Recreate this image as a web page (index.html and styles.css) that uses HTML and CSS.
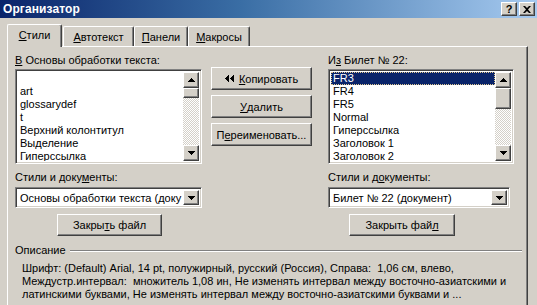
FILE: index.html
```html
<!DOCTYPE html>
<html lang="ru">
<head>
<meta charset="utf-8">
<title>Организатор</title>
<link rel="stylesheet" href="styles.css">
</head>
<body>
<div class="window">
  <div class="titlebar">
    <span class="title">Организатор</span>
    <div class="tbtns">
      <span class="tbtn raised q">?</span>
      <span class="tbtn raised"><svg width="8" height="7" viewBox="0 0 8 7"><path d="M0 0h2l2 2 2-2h2L5 3.5 8 7H6L4 5 2 7H0l3-3.5z"/></svg></span>
    </div>
  </div>

  <div class="tabs">
    <div class="tab active"><u>С</u>тили</div>
    <div class="tab t2"><u>А</u>втотекст</div>
    <div class="tab t3"><u>П</u>анели</div>
    <div class="tab t4"><u>М</u>акросы</div>
  </div>

  <div class="panel">
    <div class="cols">
      <div class="col left">
        <div class="lbl"><u>В</u> Основы обработки текста:</div>
        <div class="listbox sunken lb-left">
          <div class="items">
            <div class="item"></div>
            <div class="item">art</div>
            <div class="item">glossarydef</div>
            <div class="item">t</div>
            <div class="item">Верхний колонтитул</div>
            <div class="item">Выделение</div>
            <div class="item">Гиперссылка</div>
          </div>
          <div class="sb">
            <div class="arrow raised"><svg width="7" height="4" viewBox="0 0 7 4"><path d="M3 0h1v1h1v1h1v1h1v1H0V3h1V2h1V1h1z"/></svg></div>
            <div class="thumb raised th-small"></div>
            <div class="track"></div>
            <div class="arrow raised"><svg width="7" height="4" viewBox="0 0 7 4"><path d="M0 0h7v1H6v1H5v1H4v1H3V3H2V2H1V1H0z"/></svg></div>
          </div>
        </div>
        <div class="lbl lbl2">Стили и доку<u>м</u>енты:</div>
        <div class="combo sunken">
          <div class="ctext">Основы обработки текста (доку</div>
          <div class="cbtn raised"><svg width="7" height="4" viewBox="0 0 7 4"><path d="M0 0h7v1H6v1H5v1H4v1H3V3H2V2H1V1H0z"/></svg></div>
        </div>
        <div class="btn raised close-l">Закры<u>т</u>ь файл</div>
      </div>

      <div class="col mid">
        <div class="btn raised"><svg class="cpy" width="10" height="7" viewBox="0 0 10 7"><path d="M3 0h1v7H3V6H2V5H1V4H0V3h1V2h1V1h1z"/><path d="M8 0h1v7H8V6H7V5H6V4H5V3h1V2h1V1h1z"/></svg><span><u>К</u>опировать</span></div>
        <div class="btn raised"><u>У</u>далить</div>
        <div class="btn raised">П<u>е</u>реименовать...</div>
      </div>

      <div class="col right">
        <div class="lbl">И<u>з</u> Билет № 22:</div>
        <div class="listbox sunken lb-right">
          <div class="items">
            <div class="item sel">FR3</div>
            <div class="item">FR4</div>
            <div class="item">FR5</div>
            <div class="item">Normal</div>
            <div class="item">Гиперссылка</div>
            <div class="item">Заголовок 1</div>
            <div class="item">Заголовок 2</div>
          </div>
          <div class="sb">
            <div class="arrow raised"><svg width="7" height="4" viewBox="0 0 7 4"><path d="M3 0h1v1h1v1h1v1h1v1H0V3h1V2h1V1h1z"/></svg></div>
            <div class="thumb raised th-big"></div>
            <div class="track"></div>
            <div class="arrow raised"><svg width="7" height="4" viewBox="0 0 7 4"><path d="M0 0h7v1H6v1H5v1H4v1H3V3H2V2H1V1H0z"/></svg></div>
          </div>
        </div>
        <div class="lbl lbl2">Стили и д<u>о</u>кументы:</div>
        <div class="combo sunken combo-r">
          <div class="ctext">Билет № 22 (документ)</div>
          <div class="cbtn raised"><svg width="7" height="4" viewBox="0 0 7 4"><path d="M0 0h7v1H6v1H5v1H4v1H3V3H2V2H1V1H0z"/></svg></div>
        </div>
        <div class="btn raised close-r">Закрыть фай<u>л</u></div>
      </div>
    </div>

    <div class="group">
      <div class="ghead"><span>Описание</span><i class="gline"></i></div>
      <div class="desc">
        <div>Шрифт: (Default) Arial, 14 pt, полужирный, русский (Россия), Справа:&nbsp; 1,06 см, влево,</div>
        <div>Междустр.интервал:&nbsp; множитель 1,08 ин, Не изменять интервал между восточно-азиатскими и</div>
        <div>латинскими буквами, Не изменять интервал между восточно-азиатскими буквами и ...</div>
      </div>
    </div>
  </div>
</div>
</body>
</html>
```

FILE: styles.css
```css
* { box-sizing: border-box; }

body {
  margin: 0;
  width: 537px;
  height: 305px;
  overflow: hidden;
  background: #d4d0c8;
  font-family: "Liberation Sans", Arial, sans-serif;
  font-size: 11px;
  color: #000;
}

u { text-decoration: underline; text-underline-offset: 1px; }

.raised {
  background: #d4d0c8;
  border: 1px solid;
  border-color: #fff #404040 #404040 #fff;
  box-shadow: inset -1px -1px #808080;
}

.sunken {
  border: 1px solid;
  border-color: #808080 #fff #fff #808080;
  box-shadow: inset 1px 1px #404040, inset -1px -1px #d4d0c8;
}

/* title bar */
.titlebar {
  height: 18px;
  background: linear-gradient(90deg, #0a246a 0%, #3a6ea5 45%, #a6caf0 100%);
  display: flex;
  align-items: center;
  justify-content: space-between;
  padding: 0 2px 0 3px;
}
.title {
  color: #fff;
  font-weight: bold;
  font-size: 12px;
  letter-spacing: 0.1px;
}
.tbtns { display: flex; gap: 2px; }
.tbtn {
  width: 16px;
  height: 14px;
  display: flex;
  align-items: center;
  justify-content: center;
}
.tbtn.q { font-weight: bold; font-size: 11px; line-height: 12px; }

/* tabs */
.tabs {
  margin-top: 6px;
  padding-left: 7px;
  height: 22px;
  display: flex;
  align-items: flex-end;
  position: relative;
  z-index: 2;
}
.tab {
  height: 20px;
  border-top: 1px solid #fff;
  border-left: 1px solid #fff;
  border-right: 1px solid #404040;
  box-shadow: inset -1px 0 #808080;
  border-radius: 2px 2px 0 0;
  display: flex;
  align-items: center;
  justify-content: center;
  padding-top: 1px;
}
.tab.active {
  width: 55px;
  height: 23px;
  margin-bottom: -1px;
  background: #d4d0c8;
  padding-top: 0;
  padding-bottom: 2px;
}
.t2 { width: 71px; margin-left: 1px; }
.t3 { width: 54px; }
.t4 { width: 62px; }

/* panel */
.panel {
  margin-left: 7px;
  width: 521px;
  height: 259px;
  border-top: 1px solid #fff;
  border-left: 1px solid #fff;
  border-right: 1px solid #404040;
  box-shadow: inset -1px 0 #808080;
  padding: 7px 0 0 7px;
  position: relative;
  z-index: 1;
}

.cols { display: flex; }
.col { display: flex; flex-direction: column; }
.left { width: 187px; margin-right: 9px; }
.mid { width: 101px; margin-right: 16px; padding-top: 13px; gap: 5px; }
.right { width: 186px; }

.lbl { line-height: 13px; height: 13px; white-space: nowrap; }
.lbl2 { margin-top: 7px; }

/* listbox */
.listbox {
  margin-top: 2px;
  height: 95px;
  background: #fff;
  display: flex;
  padding: 2px;
}
.items { flex: 1; overflow: hidden; }
.item {
  height: 13px;
  line-height: 13px;
  padding-left: 2px;
  white-space: nowrap;
}
.item.sel { background: #0a246a; color: #fff; outline: 1px dotted #e0c890; outline-offset: -1px; }

.sb { width: 16px; display: flex; flex-direction: column; }
.arrow {
  height: 16px;
  flex: none;
  display: flex;
  align-items: center;
  justify-content: center;
}
.thumb { flex: none; }
.th-small { height: 10px; }
.th-big { height: 21px; }
.track {
  flex: 1;
  background: repeating-conic-gradient(#fff 0 25%, #d4d0c8 0 50%) 0 0 / 2px 2px;
}

/* combo */
.combo {
  margin-top: 3px;
  height: 21px;
  background: #fff;
  display: flex;
  padding: 2px;
}
.combo-r { width: 182px; }
.ctext {
  flex: 1;
  overflow: hidden;
  white-space: nowrap;
  line-height: 17px;
  padding-left: 2px;
}
.cbtn {
  width: 16px;
  flex: none;
  display: flex;
  align-items: center;
  justify-content: center;
}

/* buttons */
.btn {
  height: 23px;
  display: flex;
  align-items: center;
  justify-content: center;
  white-space: nowrap;
}
.cpy { margin-right: 4px; }
.close-l { margin-top: 6px; margin-left: 42px; width: 105px; height: 22px; }
.close-r { margin-top: 6px; margin-left: 21px; width: 106px; height: 22px; }

/* group */
.group { width: 507px; margin-top: 8px; }
.ghead {
  display: flex;
  align-items: center;
  height: 13px;
  line-height: 13px;
}
.gline {
  flex: 1;
  margin-left: 4px;
  height: 2px;
  border-top: 1px solid #808080;
  border-bottom: 1px solid #fff;
}
.desc {
  margin-top: 5px;
  padding-left: 7px;
  line-height: 13px;
  white-space: nowrap;
}
```
